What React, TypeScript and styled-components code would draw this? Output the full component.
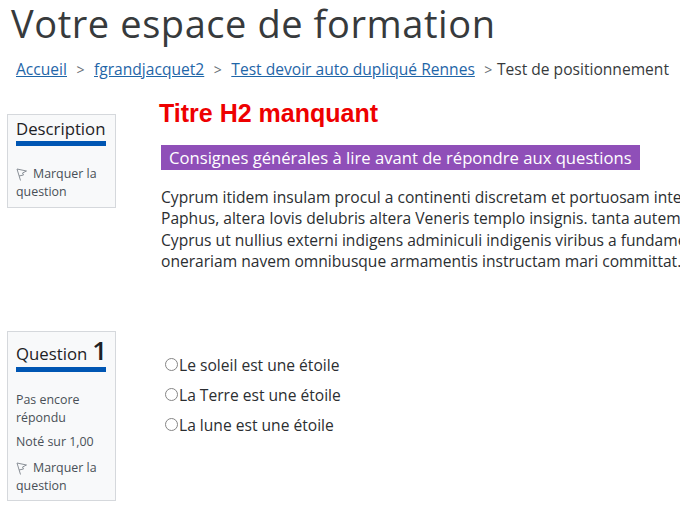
import React from 'react';
import styled, { createGlobalStyle } from 'styled-components';

const GlobalStyle = createGlobalStyle`
  html, body {
    margin: 0;
    padding: 0;
    background: #fff;
    overflow: hidden;
  }
  body {
    font-family: "Open Sans", sans-serif;
    color: #373a3c;
  }
`;

const Page = styled.div`
  width: 680px;
  height: 507px;
  overflow: hidden;
`;

const Heading = styled.h1`
  margin: 0 0 0 11px;
  height: 46px;
  font-size: 38px;
  line-height: 46px;
  font-weight: 400;
  letter-spacing: 0.57px;
  color: #373a3c;
  white-space: nowrap;
`;

const Breadcrumb = styled.nav`
  display: flex;
  margin: 13px 0 0 16px;
  height: 20px;
  align-items: center;
  font-size: 15.6px;
  white-space: nowrap;
`;

const Crumb = styled.a`
  color: #1f66a8;
  text-decoration: underline;
`;

const Separator = styled.span`
  margin: 0 9.5px;
  font-size: 14px;
  color: #6a7076;
`;

const Current = styled.span`
  color: #373a3c;
  margin-left: -5px;
`;

const QuestionRow = styled.section<{ $height: number; $top?: number }>`
  display: flex;
  align-items: flex-start;
  height: ${(p) => p.$height}px;
  margin-top: ${(p) => p.$top ?? 0}px;
  padding-left: 7px;
`;

const InfoBox = styled.aside<{ $height: number; $top?: number }>`
  box-sizing: border-box;
  flex: 0 0 109px;
  width: 109px;
  height: ${(p) => p.$height}px;
  margin-top: ${(p) => p.$top ?? 0}px;
  margin-right: 1px;
  padding: 5px 9px 0 8px;
  background: #f8f9fa;
  border: 1px solid #d5d8dc;
`;

const InfoTitle = styled.h3<{ $tall?: boolean }>`
  box-sizing: border-box;
  margin: 0;
  height: ${(p) => (p.$tall ? 30 : 21)}px;
  padding-top: ${(p) => (p.$tall ? 3 : 0)}px;
  display: flex;
  align-items: baseline;
  font-size: 16.75px;
  line-height: 18px;
  font-weight: 400;
  color: #1d2125;
  white-space: nowrap;
`;

const QuestionNumber = styled.span`
  font-size: 26px;
  line-height: 20px;
  font-weight: 600;
  margin-left: 5px;
`;

const TitleBar = styled.div`
  height: 5px;
  background: #0056b3;
  margin-bottom: 19px;
`;

const InfoText = styled.div`
  font-size: 12.4px;
  line-height: 18px;
  margin-bottom: 6px;
  color: #495057;
`;

const FlagLine = styled.div`
  font-size: 12.4px;
  line-height: 18px;
  color: #495057;

  ${InfoText} + & {
    margin-top: 8px;
  }
`;

const FlagIcon = styled.svg`
  width: 11px;
  height: 13px;
  margin-right: 6px;
  vertical-align: -3px;
`;

const Content = styled.div`
  flex: 1;
  min-width: 0;
  padding-left: 44px;
`;

const MissingTitle = styled.h2`
  margin: -1px 0 0 -2px;
  font-family: "Liberation Sans", Arial, sans-serif;
  font-size: 25px;
  line-height: 28px;
  font-weight: 700;
  color: #ee0000;
  white-space: nowrap;
`;

const Banner = styled.div`
  display: inline-block;
  margin-top: 18px;
  padding: 0 8.5px 0 8px;
  height: 25px;
  line-height: 25px;
  font-size: 16.65px;
  color: #fff;
  background: #8f4fb8;
  white-space: nowrap;
`;

const Paragraph = styled.p`
  margin: 17px 0 0;
  font-size: 15.6px;
  line-height: 21.3px;
  white-space: nowrap;
  color: #2b2e31;
`;

const Answers = styled.div`
  display: flex;
  flex-direction: column;
  gap: 8px;
  padding: 23px 0 0 4px;
`;

const Answer = styled.label`
  display: flex;
  align-items: center;
  height: 22px;
  font-size: 15.6px;
  color: #2b2e31;
`;

const Radio = styled.span`
  box-sizing: border-box;
  width: 13px;
  height: 13px;
  margin-right: 1px;
  margin-top: -2px;
  border: 1px solid #858585;
  border-radius: 50%;
  background: #fff;
`;

const Flag = () => (
  <FlagIcon viewBox="0 0 11 13" fill="none" stroke="#8a9097" strokeWidth="1">
    <path d="M1 1 L4.5 12.5" />
    <path d="M1 1 L10.5 3 L6.5 5 L7.5 7 L3 8" />
  </FlagIcon>
);

const answers = ['Le soleil est une étoile', 'La Terre est une étoile', 'La lune est une étoile'];

const App = () => (
  <Page>
    <GlobalStyle />
    <Heading>Votre espace de formation</Heading>
    <Breadcrumb>
      <Crumb>Accueil</Crumb>
      <Separator>&gt;</Separator>
      <Crumb>fgrandjacquet2</Crumb>
      <Separator>&gt;</Separator>
      <Crumb>Test devoir auto dupliqué Rennes</Crumb>
      <Separator>&gt;</Separator>
      <Current>Test de positionnement</Current>
    </Breadcrumb>
    <QuestionRow $height={231} $top={21}>
      <InfoBox $height={94} $top={14}>
        <InfoTitle>Description</InfoTitle>
        <TitleBar />
        <FlagLine>
          <Flag />
          Marquer la question
        </FlagLine>
      </InfoBox>
      <Content>
        <MissingTitle>Titre H2 manquant</MissingTitle>
        <Banner>Consignes générales à lire avant de répondre aux questions</Banner>
        <Paragraph>
          Cyprum itidem insulam procul a continenti discretam et portuosam inter municipia crebra
          <br />
          Paphus, altera Iovis delubris altera Veneris templo insignis. tanta autem tamque multiplici
          <br />
          Cyprus ut nullius externi indigens adminiculi indigenis viribus a fundamento ipso carinae
          <br />
          onerariam navem omnibusque armamentis instructam mari committat.
        </Paragraph>
      </Content>
    </QuestionRow>
    <QuestionRow $height={170}>
      <InfoBox $height={170}>
        <InfoTitle $tall>
          Question<QuestionNumber>1</QuestionNumber>
        </InfoTitle>
        <TitleBar />
        <InfoText>Pas encore répondu</InfoText>
        <InfoText>Noté sur 1,00</InfoText>
        <FlagLine>
          <Flag />
          Marquer la question
        </FlagLine>
      </InfoBox>
      <Content>
        <Answers>
          {answers.map((answer) => (
            <Answer key={answer}>
              <Radio />
              {answer}
            </Answer>
          ))}
        </Answers>
      </Content>
    </QuestionRow>
  </Page>
);

export default App;
